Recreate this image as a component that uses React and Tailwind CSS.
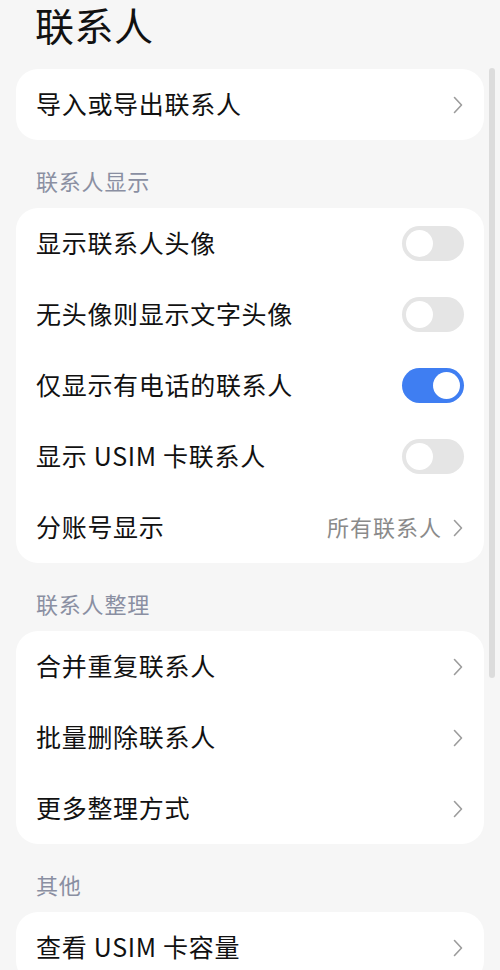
import React from "react";

const font = { fontFamily: '"Noto Sans CJK SC", "Noto Sans", sans-serif' };

function Chevron() {
  return (
    <svg width="12" height="18" viewBox="0 0 12 18" fill="none" className="shrink-0">
      <path d="M2.5 1.5 L9.5 9 L2.5 16.5" stroke="#9c9c9c" strokeWidth="1.6" strokeLinecap="round" strokeLinejoin="round" />
    </svg>
  );
}

function Toggle({ on }) {
  return (
    <div
      className={
        on
          ? "w-[62px] h-[35px] rounded-full bg-[#3f7ef2] flex items-center justify-end px-[4px]"
          : "w-[62px] h-[35px] rounded-full bg-[#e5e5e5] flex items-center justify-start px-[4px]"
      }
    >
      <div className="w-[27px] h-[27px] rounded-full bg-white" />
    </div>
  );
}

function Row({ label, toggle, value, chevron }) {
  return (
    <div className="h-[71px] flex items-center justify-between pl-[20px] pr-[20px]">
      <span className="text-[25px] leading-[30px] tracking-[0.7px] text-[#111111] pb-[3px]">{label}</span>
      <div className="flex items-center gap-[10px]">
        {value && <span className="text-[22px] leading-[28px] tracking-[1px] text-[#8a8a8a] pb-[3px]">{value}</span>}
        {toggle !== undefined && <Toggle on={toggle} />}
        {chevron && <Chevron />}
      </div>
    </div>
  );
}

function Section({ title }) {
  return (
    <div className="h-[68px] pt-[28px] pl-[20px]">
      <span className="text-[22px] leading-[24px] tracking-[0.8px] text-[#8a8fa2]">{title}</span>
    </div>
  );
}

export default function App() {
  return (
    <div className="relative w-[500px] h-[970px] overflow-hidden bg-[#f6f6f6] px-[16px]" style={font}>
      <div className="h-[69px] pl-[19px] pt-[3px]">
        <h1 className="text-[39px] leading-[42px] tracking-[0.5px] text-[#111111]">联系人</h1>
      </div>

      <div className="bg-white rounded-[22px] w-[468px]">
        <Row label="导入或导出联系人" chevron />
      </div>

      <Section title="联系人显示" />
      <div className="bg-white rounded-[22px] w-[468px]">
        <Row label="显示联系人头像" toggle={false} />
        <Row label="无头像则显示文字头像" toggle={false} />
        <Row label="仅显示有电话的联系人" toggle={true} />
        <Row label="显示 USIM 卡联系人" toggle={false} />
        <Row label="分账号显示" value="所有联系人" chevron />
      </div>

      <Section title="联系人整理" />
      <div className="bg-white rounded-[22px] w-[468px]">
        <Row label="合并重复联系人" chevron />
        <Row label="批量删除联系人" chevron />
        <Row label="更多整理方式" chevron />
      </div>

      <Section title="其他" />
      <div className="bg-white rounded-[22px] w-[468px]">
        <Row label="查看 USIM 卡容量" chevron />
      </div>

      <div className="absolute left-[489px] top-[68px] w-[6px] h-[610px] rounded-full bg-[#dcdcdc]" />
    </div>
  );
}
